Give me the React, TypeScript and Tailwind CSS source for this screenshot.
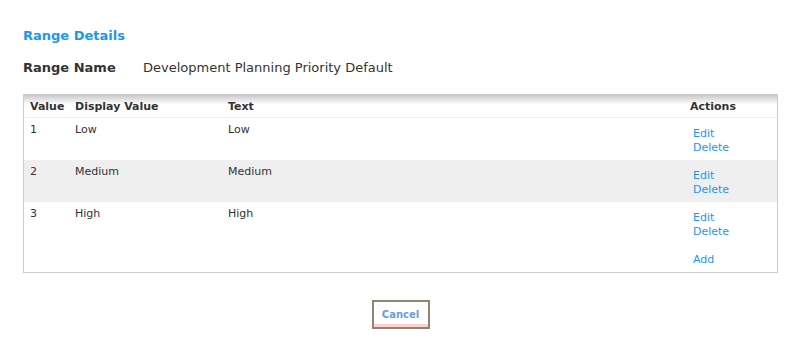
import React from "react";

const rows = [
  { v: "1", d: "Low", t: "Low" },
  { v: "2", d: "Medium", t: "Medium" },
  { v: "3", d: "High", t: "High" },
];

export default function App() {
  return (
    <div
      className="w-[788px] h-[345px] bg-white text-[#333] pl-[23px] pt-[28px]"
      style={{ fontFamily: '"DejaVu Sans", Verdana, sans-serif' }}
    >
      <div className="text-[13px] font-bold text-[#1e96f0] leading-[16px]">Range Details</div>
      <div className="flex mt-[16px] text-[13px] leading-[16px] items-center">
        <div className="font-bold w-[120px] text-[#333]">Range Name</div>
        <div className="text-[#333]">Development Planning Priority Default</div>
      </div>
      <div className="mt-[18px] w-[755px] border border-[#cccccc] border-t-0 text-[11px] leading-[14px]">
        <div className="h-[24px] flex items-center font-bold text-[#333] border-b border-[#eeeeee] bg-gradient-to-b from-[#c4c4c4] via-white via-45% to-white">
          <div className="w-[45px] pl-[6px] pt-[2px]">Value</div>
          <div className="w-[153px] pl-[6px] pt-[2px]">Display Value</div>
          <div className="w-[462px] pl-[6px] pt-[2px]">Text</div>
          <div className="pl-[6px] pt-[2px]">Actions</div>
        </div>
        {rows.map((r, i) => (
          <div key={r.v} className={`flex h-[42px] ${i === 1 ? "bg-[#efefef]" : "bg-white"}`}>
            <div className="w-[45px] pl-[6px] pt-[5px]">{r.v}</div>
            <div className="w-[153px] pl-[6px] pt-[5px]">{r.d}</div>
            <div className="w-[462px] pl-[6px] pt-[5px]">{r.t}</div>
            <div className="pl-[9px] pt-[9px] flex flex-col text-[#1e96f0]">
              <span>Edit</span>
              <span>Delete</span>
            </div>
          </div>
        ))}
        <div className="flex h-[28px]">
          <div className="w-[660px]" />
          <div className="pl-[9px] pt-[9px] text-[#1e96f0]">Add</div>
        </div>
      </div>
      <div className="w-[755px] flex justify-center mt-[27px]">
        <button
          className="w-[58px] h-[29px] border-2 border-[#8f8575] bg-white flex flex-col items-stretch p-0"
          style={{ fontFamily: '"DejaVu Sans", Verdana, sans-serif' }}
        >
          <span className="flex-1 flex items-center justify-center text-[10px] font-bold text-[#6b9be0] pt-[2px]">
            Cancel
          </span>
          <span className="h-[3px] bg-[#ffd0d0]" />
        </button>
      </div>
    </div>
  );
}
